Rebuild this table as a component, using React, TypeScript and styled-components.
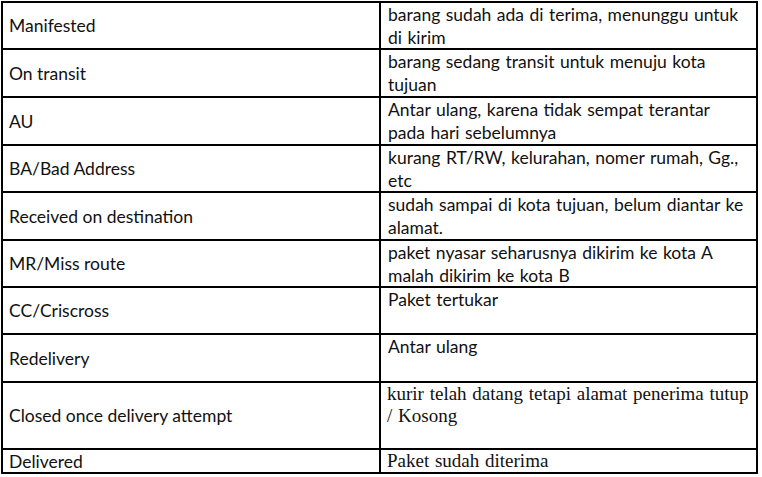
import React from 'react';
import styled, { createGlobalStyle } from 'styled-components';

const GlobalStyle = createGlobalStyle`
  html, body {
    margin: 0;
    padding: 0;
    background: #fff;
  }
`;

type Row = {
  status: string;
  note: string[];
  height: number;
  serif?: boolean;
};

// heights include the 2px bottom rule of each row
const rows: Row[] = [
  { status: 'Manifested', note: ['barang sudah ada di terima, menunggu untuk', 'di kirim'], height: 47 },
  { status: 'On transit', note: ['barang sedang transit untuk menuju kota', 'tujuan'], height: 48 },
  { status: 'AU', note: ['Antar ulang, karena tidak sempat terantar', 'pada hari sebelumnya'], height: 48 },
  { status: 'BA/Bad Address', note: ['kurang RT/RW, kelurahan, nomer rumah, Gg.,', 'etc'], height: 47 },
  { status: 'Received on destination', note: ['sudah sampai di kota tujuan, belum diantar ke', 'alamat.'], height: 48 },
  { status: 'MR/Miss route', note: ['paket nyasar seharusnya dikirim ke kota A', 'malah dikirim ke kota B'], height: 47 },
  { status: 'CC/Criscross', note: ['Paket tertukar'], height: 47 },
  { status: 'Redelivery', note: ['Antar ulang'], height: 48 },
  { status: 'Closed once delivery attempt', note: ['kurir telah datang tetapi alamat penerima tutup', '/ Kosong'], height: 67, serif: true },
  { status: 'Delivered', note: ['Paket sudah diterima'], height: 24, serif: true },
];

const Page = styled.div`
  padding: 1px 0 0 1px;
`;

const Grid = styled.div`
  display: grid;
  grid-template-columns: 378px 377px;
  width: 755px;
  border-top: 2px solid #000;
  border-left: 2px solid #000;
  color: #111;
`;

const StatusCell = styled.div<{ $h: number }>`
  height: ${p => p.$h}px;
  box-sizing: border-box;
  border-right: 2px solid #000;
  border-bottom: 2px solid #000;
  padding-left: 6px;
  display: flex;
  align-items: center;
  font-family: Lato, 'Open Sans', sans-serif;
  font-size: 17.5px;
  white-space: nowrap;
`;

const NoteCell = styled.div<{ $h: number; $serif?: boolean }>`
  height: ${p => p.$h}px;
  box-sizing: border-box;
  border-right: 2px solid #000;
  border-bottom: 2px solid #000;
  padding: ${p => (p.$serif ? '0 0 0 6px' : '0 0 0 7px')};
  font-family: ${p => (p.$serif ? "'Liberation Serif', serif" : "Lato, 'Open Sans', sans-serif")};
  font-size: ${p => (p.$serif ? '19px' : '17.5px')};
  line-height: ${p => (p.$serif ? '22px' : '23px')};
  word-spacing: 1px;
  white-space: nowrap;
  overflow: hidden;
`;

const Line = styled.div``;

export default function App() {
  return (
    <Page>
      <GlobalStyle />
      <Grid>
        {rows.map(r => (
          <React.Fragment key={r.status}>
            <StatusCell $h={r.height}>{r.status}</StatusCell>
            <NoteCell $h={r.height} $serif={r.serif}>
              {r.note.map(l => (
                <Line key={l}>{l}</Line>
              ))}
            </NoteCell>
          </React.Fragment>
        ))}
      </Grid>
    </Page>
  );
}
